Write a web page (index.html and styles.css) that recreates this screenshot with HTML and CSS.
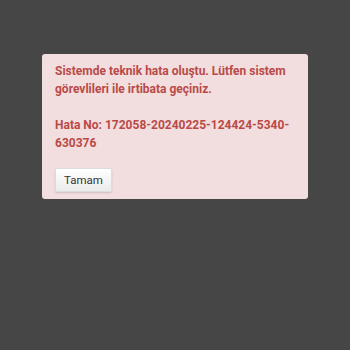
FILE: index.html
```html
<!DOCTYPE html>
<html lang="tr">
<head>
  <meta charset="UTF-8" />
  <meta name="viewport" content="width=device-width, initial-scale=1.0"/>
  <title>Hata</title>
  <link rel="stylesheet" href="styles.css">
</head>
<body>
  <div class="alert">
    <p class="msg">Sistemde teknik hata oluştu. Lütfen sistem görevlileri ile irtibata geçiniz.</p>
    <p class="msg last">Hata No: 172058-20240225-124424-5340-630376</p>
    <button class="ok">Tamam</button>
  </div>
</body>
</html>
```

FILE: styles.css
```css
body {
  margin: 0;
  font-family: Roboto, "Liberation Sans", sans-serif;
  background: #464646;
  padding: 54px 42px;
}
.alert {
  background: #f2dede;
  border-radius: 3px;
  padding: 8px 14px 7px 13px;
}
.msg {
  margin: 0 0 18px;
  font-size: 12px;
  line-height: 18px;
  font-weight: bold;
  color: #b94a48;
}
.msg.last {
  margin-bottom: 16px;
}
button.ok {
  display: block;
  height: 24px;
  padding: 0 8px;
  font-family: inherit;
  font-size: 11.5px;
  color: #333;
  background: linear-gradient(#ffffff, #ebebeb);
  border: 1px solid #dddddd;
  border-radius: 2px;
  box-shadow: 0 1px 2px rgba(0, 0, 0, 0.15);
}
```
